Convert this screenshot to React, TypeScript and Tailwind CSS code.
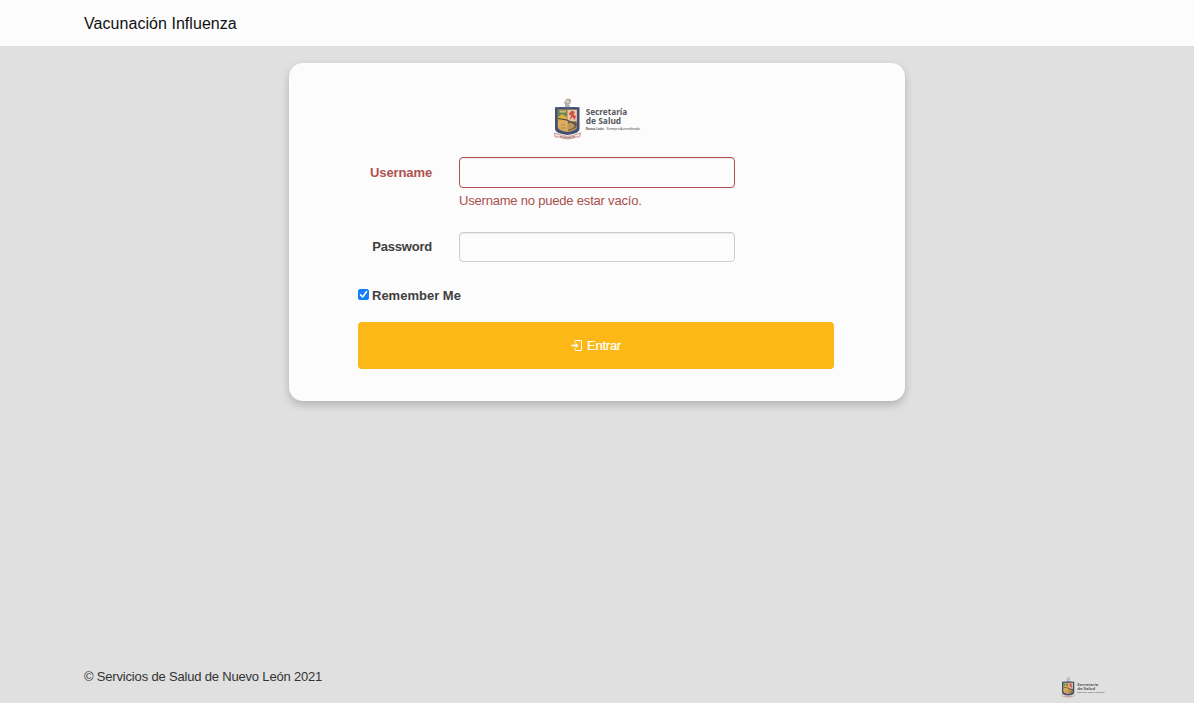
import { useState } from "react";

function HealthLogo({ className }: { className: string }) {
  return (
    <svg className={className} viewBox="0 0 88 44" role="img" aria-label="Secretaría de Salud">
      <path d="M12 10 12 6 10.5 5 12.5 3 13 1 16 .5 18 3 17.5 5.5 16 6.5 17.5 9Z" fill="#b3afac" />
      <path d="M13 3 15 2.2 16.5 3.5 14.5 5Z" fill="#dedbd7" />
      <circle cx="16.8" cy="2.2" r="1" fill="#b49a65" />
      <path d="M2 9.3Q8 8.8 14.5 9.2 21 8.8 26.5 9.3V31Q26.5 35.5 14.5 37 2 35.5 2 31Z" fill="#414f75" />
      <path d="M4.7 11.5H24V29Q24 32.5 14.5 34 4.7 32.5 4.7 29Z" fill="#d0a45e" />
      <path d="M5 12H14V22H5Z" fill="#66855a" />
      <path d="M5 19 9 16 14 19V22H5Z" fill="#dcb13c" />
      <path d="M6.5 13.5H13" stroke="#d2bd63" strokeWidth="2" />
      <path d="M15 12H23.7V23H15Z" fill="#e3c7ae" />
      <path d="M16.5 22 18 17.5 15.5 16 19 12.5 21.8 14 20.5 17 23 18 21.8 22 19.5 19Z" fill="#d4513f" />
      <path d="M5.3 24 9 21.5 14 23V33Q8 32 5.3 29Z" fill="#dead5c" />
      <path d="M7.5 27H12M8 30H13" stroke="#a57e4c" strokeWidth=".8" />
      <path d="M15 23.5H23.7V29Q22 31.5 15 33Z" fill="#7b654c" />
      <path d="M15 26 18 24 22 26 20 30 15 32Z" fill="#c09856" />
      <path d="M5 20.5 14 22 23.5 27" fill="none" stroke="#40454a" strokeWidth="1.2" />
      <path d="M1.5 35 5 36Q14.5 40.5 24 36L27.5 35 26.5 39 23 39Q14.5 43 6 39L2 39Z" fill="#eee7e3" stroke="#c87f74" strokeWidth=".8" />
      <path d="M7 38.5Q14.5 41 22 38.5" fill="none" stroke="#8d7670" strokeWidth=".9" />
      <text x="32.7" y="17" fontSize="8" fontWeight="700" textLength="41.5" lengthAdjust="spacingAndGlyphs" fill="#5a5a61" className="font-['Noto_Sans',sans-serif]">Secretaría</text>
      <text x="32.7" y="26" fontSize="8" fontWeight="700" textLength="35.5" lengthAdjust="spacingAndGlyphs" fill="#5a5a61" className="font-['Noto_Sans',sans-serif]">de Salud</text>
      <text x="32.7" y="32" fontSize="3.4" fontWeight="700" textLength="18" lengthAdjust="spacingAndGlyphs" fill="#55555a" className="font-['Noto_Sans',sans-serif]">Nuevo León</text>
      <text x="53.5" y="32" fontSize="3.4" textLength="33.5" lengthAdjust="spacingAndGlyphs" fill="#44444a" className="font-['Noto_Sans',sans-serif]">Siempre Ascendiendo</text>
    </svg>
  );
}

export default function App() {
  const [remember, setRemember] = useState(true);
  return (
    <div className="flex min-h-screen flex-col bg-[#e0e0e0] font-['Liberation_Sans',Arial,sans-serif] text-[13px] leading-[18px] text-[#333]">
      <header className="flex h-[46px] items-center bg-[#fcfcfc] px-[84px] pt-0.5 text-base tracking-[0.05px] text-[#111]">
        <span>Vacunación Influenza</span>
      </header>

      <main className="flex-1 pt-[17px]">
        <form
          noValidate
          onSubmit={(event) => event.preventDefault()}
          className="mx-auto h-[338px] w-[616px] rounded-[14px] bg-[#fcfcfc] pr-[71px] pl-[69px] pt-[35px] shadow-[0_4px_8px_rgba(0,0,0,0.2)]"
        >
          <HealthLogo className="ml-[195px] h-11 w-[88px]" />
          <div className="mt-[15px] flex">
            <label htmlFor="username" className="mt-[7px] w-[74px] text-right font-bold tracking-[-0.12px] text-[#ad5351]">Username</label>
            <div className="ml-[27px] w-[276px]">
              <input id="username" className="block h-[31px] w-full rounded-[4px] border border-[#b3514f] bg-transparent px-3 shadow-[inset_0_1px_1px_rgba(0,0,0,0.075)] outline-none" />
              <p className="mt-1 tracking-[-0.2px] text-[#a94f4d]">Username no puede estar vacío.</p>
            </div>
          </div>
          <div className="mt-[22px] flex">
            <label htmlFor="password" className="mt-[6px] w-[74px] text-right font-bold tracking-[-0.2px] text-[#404040]">Password</label>
            <input id="password" type="password" className="ml-[27px] h-[30px] w-[276px] rounded-[4px] border border-[#ccc] bg-transparent px-3 shadow-[inset_0_1px_1px_rgba(0,0,0,0.075)] outline-none" />
          </div>
          <label className="mt-[25px] flex h-[18px] items-start font-bold text-[#404040]">
            <span className="relative mt-[2px] mr-[3px] size-[11px]">
              <input type="checkbox" checked={remember} onChange={(event) => setRemember(event.target.checked)} className="peer block size-[11px] appearance-none rounded-[2px] border border-[#777] checked:border-[#147efb] checked:bg-[#147efb]" />
              <svg viewBox="0 0 11 11" className="pointer-events-none absolute inset-0 hidden peer-checked:block" fill="none" stroke="white" strokeWidth="1.6" strokeLinecap="round" strokeLinejoin="round"><path d="M2.5 5.8 4.6 8 8.5 2.7" /></svg>
            </span>
            Remember Me
          </label>
          <button className="mt-[17px] flex h-[47px] w-[476px] items-center justify-center rounded-[4px] bg-[#fcb817] tracking-[-0.25px] text-white [-webkit-text-stroke:0.2px_white]">
            <svg viewBox="0 0 12 12" className="mr-1 size-3" fill="none" stroke="currentColor" strokeWidth="1"><path d="M4 2.5V1Q4 .5 4.5 .5H10Q10.5 .5 10.5 1V10Q10.5 10.5 10 10.5H4.5Q4 10.5 4 10V8.5" /><path d="M.5 5.5H6" strokeWidth="1.6" /><path d="M4.5 2.9 7.6 5.5 4.5 8.1Z" fill="currentColor" stroke="none" /></svg>
            Entrar
          </button>
        </form>
      </main>

      <footer className="flex h-[54px] justify-between border-t border-[#dddddd] bg-[#e0e0e0] pr-[89px] pl-[84px]">
        <p className="mt-[18px] tracking-[-0.18px]">© Servicios de Salud de Nuevo León 2021</p>
        <HealthLogo className="mt-[27px] h-[22px] w-[44px]" />
      </footer>
    </div>
  );
}
